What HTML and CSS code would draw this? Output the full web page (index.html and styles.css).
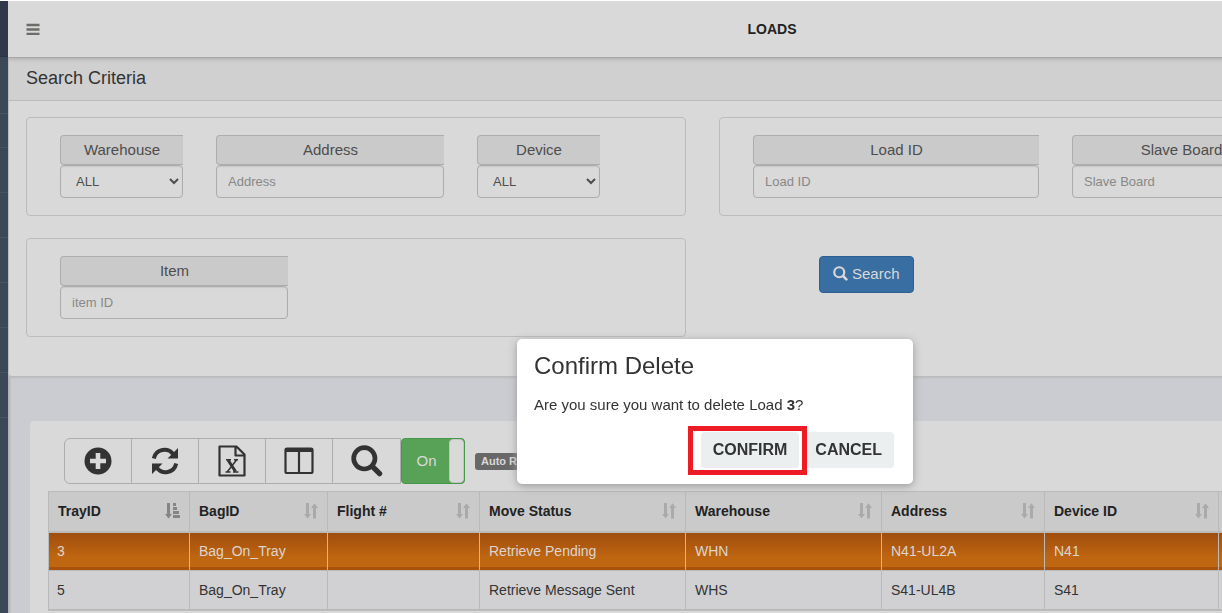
FILE: index.html
```html
<!DOCTYPE html>
<html lang="en">
<head>
<meta charset="utf-8">
<title>Loads</title>
<link rel="stylesheet" href="styles.css">
</head>
<body>
<svg class="defs" aria-hidden="true">
  <symbol id="sort" viewBox="0 0 14 16"><path d="M2 0h3v11h2L3.500 15.500 0 11h2zM9 15.500h3V5h2L10.500.2 7 5h2z"/></symbol>
  <symbol id="lens" viewBox="0 0 30 30"><circle cx="12.500" cy="12.500" r="10" fill="none" stroke="currentColor" stroke-width="4.400"/><path d="M20 20l6.800 6.800" stroke="currentColor" stroke-width="5" stroke-linecap="round"/></symbol>
</svg>
<div class="shell">
  <aside class="sidebar"><div class="brand"></div><ul class="side-list"><li></li><li></li><li></li><li></li><li></li><li></li><li></li><li></li></ul></aside>
  <main class="content">
    <header class="topbar">
      <button class="menu" aria-label="Menu"><svg width="14" height="12" viewBox="0 0 14 12"><path d="M.5 2h13M.5 6.500h13M.5 11h13" stroke="#6c6c69" stroke-width="2.400"/></svg></button>
      <h1>LOADS</h1>
    </header>
    <section class="criteria">
      <h2>Search Criteria</h2>
      <form class="wells">
        <div class="well">
          <div class="field small"><label for="wh">Warehouse</label><select id="wh"><option>ALL</option></select></div>
          <div class="field medium"><label for="ad">Address</label><input id="ad" type="text" placeholder="Address"></div>
          <div class="field small"><label for="dv">Device</label><select id="dv"><option>ALL</option></select></div>
        </div>
        <div class="well">
          <div class="field large"><label for="ld">Load ID</label><input id="ld" type="text" placeholder="Load ID"></div>
          <div class="field board"><label for="sb">Slave Board</label><input id="sb" type="text" placeholder="Slave Board"></div>
        </div>
        <div class="well">
          <div class="field medium"><label for="it">Item</label><input id="it" type="text" placeholder="item ID"></div>
        </div>
        <div class="action"><button type="button" class="search"><svg width="15" height="15"><use href="#lens"/></svg>Search</button></div>
      </form>
    </section>
    <section class="card">
      <div class="toolbar">
        <div class="tools">
          <button aria-label="Add"><svg width="28" height="28" viewBox="0 0 28 28"><circle cx="14" cy="14" r="13.500" fill="#333"/><path d="M14 6v16M6 14h16" stroke="#d9d9d9" stroke-width="4.600"/></svg></button>
          <button aria-label="Refresh"><svg width="28" height="28" viewBox="0 0 28 28"><path d="M2.800 11.500C5 1.500 17 .5 22 7M25.200 16.500C23 26.500 11 27.500 6 21" fill="none" stroke="#333" stroke-width="4"/><path d="M27 1v10.500H16.500zM1 27V16.500h10.500z" fill="#333"/></svg></button>
          <button aria-label="Export to Excel"><svg width="28" height="32" viewBox="0 0 28 32"><path d="M1.500 1.500h17l8 8v21h-25zM17.500 1.500v9h9" fill="none" stroke="#333" stroke-width="2.200" stroke-linejoin="round"/><path d="M10 15l7.500 11.500" stroke="#333" stroke-width="3"/><path d="M18.500 15L9.500 26.500M8 14.700h5M16 14.700h4M7.500 27h5M15 27h5.500" stroke="#333" stroke-width="1.500"/></svg></button>
          <button aria-label="Columns"><svg width="30" height="28" viewBox="0 0 30 28"><rect x="1.500" y="1.500" width="27" height="24.500" rx="1.500" fill="none" stroke="#333" stroke-width="2.200"/><path d="M1 3h28" stroke="#333" stroke-width="4"/><path d="M15 4v22" stroke="#333" stroke-width="2.200"/></svg></button>
          <button aria-label="Find"><svg width="32" height="32"><use href="#lens"/></svg></button>
        </div>
        <button class="toggle" aria-pressed="true"><span>On</span><i></i></button>
        <span class="badge">Auto Refresh</span>
      </div>
      <table>
        <colgroup><col class="c1"><col class="c2"><col class="c3"><col class="c4"><col class="c5"><col class="c6"><col class="c7"><col class="c8"></colgroup>
        <thead><tr>
          <th><div><span>TrayID</span><svg class="sorted" width="15" height="16" viewBox="0 0 15 16"><path d="M2 0h3v11h2L3.500 15.500 0 11h2zM8 0h3v3H8zM8 4h4v3H8zM8 8h6v3H8zM8 12h7v3H8z"/></svg></div></th>
          <th><div><span>BagID</span><svg width="14" height="16"><use href="#sort"/></svg></div></th>
          <th><div><span>Flight #</span><svg width="14" height="16"><use href="#sort"/></svg></div></th>
          <th><div><span>Move Status</span><svg width="14" height="16"><use href="#sort"/></svg></div></th>
          <th><div><span>Warehouse</span><svg width="14" height="16"><use href="#sort"/></svg></div></th>
          <th><div><span>Address</span><svg width="14" height="16"><use href="#sort"/></svg></div></th>
          <th><div><span>Device ID</span><svg width="14" height="16"><use href="#sort"/></svg></div></th>
          <th></th>
        </tr></thead>
        <tbody>
          <tr class="selected"><td>3</td><td>Bag_On_Tray</td><td></td><td>Retrieve Pending</td><td>WHN</td><td>N41-UL2A</td><td>N41</td><td></td></tr>
          <tr><td>5</td><td>Bag_On_Tray</td><td></td><td>Retrieve Message Sent</td><td>WHS</td><td>S41-UL4B</td><td>S41</td><td></td></tr>
        </tbody>
      </table>
    </section>
  </main>
</div>
<div class="dialog" role="dialog" aria-labelledby="dlg">
  <h3 id="dlg">Confirm Delete</h3>
  <p>Are you sure you want to delete Load <b>3</b>?</p>
  <div class="choices"><span class="marked"><button>CONFIRM</button></span><button>CANCEL</button></div>
</div>
</body>
</html>
```

FILE: styles.css
```css
* { box-sizing: border-box; }
body { margin: 0; padding-top: 1px; background: #fff; color: #333; font: 14px/20px "Liberation Sans", Arial, sans-serif; overflow: hidden; }
h1, h2, h3, p, ul { margin: 0; padding: 0; }
button, input, select { font: inherit; color: inherit; margin: 0; }
button { cursor: pointer; }
.defs { display: none; }

.shell { display: flex; min-height: calc(100vh - 1px); background: #cbccd1; }
.sidebar { flex: 0 0 8px; background: #3a4857; }
.brand { height: 56px; background: #303a48; border-bottom: 1px solid #2b3442; }
.side-list { list-style: none; padding-top: 12px; }
.side-list li { height: 45px; border-bottom: 1px solid #465362; }
.side-list li:nth-child(2) { height: 34px; }
.content { flex: 1; min-width: 0; overflow: hidden; box-shadow: inset 2px 0 2px #aeb0b5; }

.topbar { position: relative; display: flex; align-items: center; justify-content: center; min-width: 1528px; height: 57px; background: #d9d9d9; border-bottom: 1px solid #a8a8a8; box-shadow: 0 1px 4px #aaa; }
.topbar h1 { font-size: 14px; color: #222; }
.menu { position: absolute; left: 18px; display: flex; padding: 0; border: 0; background: none; }

.criteria { background: #d9d9d9; border: 1px solid #bbb; border-top: 0; border-radius: 0 0 4px 4px; box-shadow: 0 1px 2px #bbb; margin-right: -8px; }
.criteria h2 { padding: 10px 17px 11px; font-size: 18px; line-height: 21px; font-weight: 400; background: #d0d0d0; border-bottom: 1px solid #bbb; }
.wells { display: grid; grid-template-columns: repeat(2, 660px); gap: 22px 33px; padding: 16px 17px 39px; }
.well { display: flex; gap: 33px; padding: 17px 33px; border: 1px solid #bcbcbc; border-radius: 4px; overflow: hidden; }
.field { display: flex; flex-direction: column; flex: none; }
.small { width: 123px; }
.medium { width: 228px; }
.board { width: 218px; }
.large { width: 286px; }
.field label { height: 30px; padding: 4px; border: 1px solid #adadad; border-right: 0; border-radius: 4px 0 0 4px; background: #cacaca; color: #4d4d4d; font-size: 15px; text-align: center; }
.field input, .field select { width: 100%; height: 33px; padding: 4px 11px; border: 1px solid #adadad; border-radius: 4px; background: #d9d9d9; color: #4d4d4d; box-shadow: inset 0 1px 1px #c8c8c8; font-size: 13px; }
.field select { padding-right: 8px; }
.field input::placeholder { color: #888; }
.action { padding: 18px 100px; }
.search { display: flex; align-items: center; gap: 4px; height: 37px; padding: 0 13px 2px; border: 1px solid #2c6092; border-radius: 4px; background: #386ea2; color: #d9d9d9; font-size: 15px; }

.card { margin: 44px 0 0 22px; padding: 17px 0 8px 18px; background: #d9d9d9; border-radius: 4px 0 0 0; }
.toolbar { display: flex; align-items: center; padding: 0 16px 7px; }
.tools { display: flex; border: 1px solid #adadad; border-radius: 6px 0 0 6px; }
.tools button { display: flex; align-items: center; justify-content: center; width: 67px; height: 44px; padding: 0; border: 0; border-left: 1px solid #adadad; background: none; color: #333; }
.tools button:first-child { width: 66px; border-left: 0; }
.tools button:last-child { width: 68px; }
.toggle { display: flex; width: 64px; height: 46px; padding: 0; overflow: hidden; border: 1px solid #46984a; border-radius: 4px; background: #57a257; color: #d9d9d9; align-items: center; }
.toggle span { flex: 1; padding-left: 2px; font-size: 15px; }
.toggle i { width: 15px; height: 44px; border: 1px solid #c4c4c4; border-radius: 4px; background: #d9d9d9; }
.badge { margin-left: 10px; padding: 0 6px; border-radius: 3px; background: #686868; color: #d9d9d9; font-size: 11px; line-height: 17px; font-weight: 700; }

table { width: 1458px; table-layout: fixed; border-collapse: collapse; }
.c1 { width: 141px; } .c2 { width: 138px; } .c3 { width: 152px; } .c4 { width: 206px; }
.c5 { width: 196px; } .c6 { width: 163px; } .c7 { width: 174px; }
th, td { height: 39px; padding: 0 9px; border: 1px solid #bababa; text-align: left; }
th { height: 40px; background: #cacaca; color: #222; border-bottom: 2px solid #bababa; }
th div { display: flex; align-items: center; justify-content: space-between; }
th svg { fill: #aaa; }
th .sorted { fill: #858585; }
td { background: #d1d1d4; }
td:first-child { padding-left: 8px; }
tbody tr:last-child td { border-bottom: 2px solid #bababa; }
.selected td { color: #dcd5cf; background: linear-gradient(#a04d0d, #be6510 65%, #c0670f); box-shadow: inset 0 -3px #a8520c; }

.dialog { position: fixed; left: 517px; top: 339px; width: 396px; padding: 13px 19px 16px 17px; border-radius: 5px; background: #fff; box-shadow: 0 2px 9px #999; }
.dialog h3 { font-size: 24px; line-height: 28px; font-weight: 400; }
.dialog p { padding: 14px 0 16px; font-size: 15px; line-height: 22px; }
.choices { display: flex; justify-content: flex-end; gap: 4px; }
.choices button { height: 36px; padding: 0 12px; border: 0; border-radius: 4px; background: #ebeff0; font-size: 16px; font-weight: 700; }
.marked { position: relative; }
.marked::after { content: ""; position: absolute; inset: -6px -8px -7px -13px; border: 5px solid #ed1c24; pointer-events: none; z-index: 1; }
```
